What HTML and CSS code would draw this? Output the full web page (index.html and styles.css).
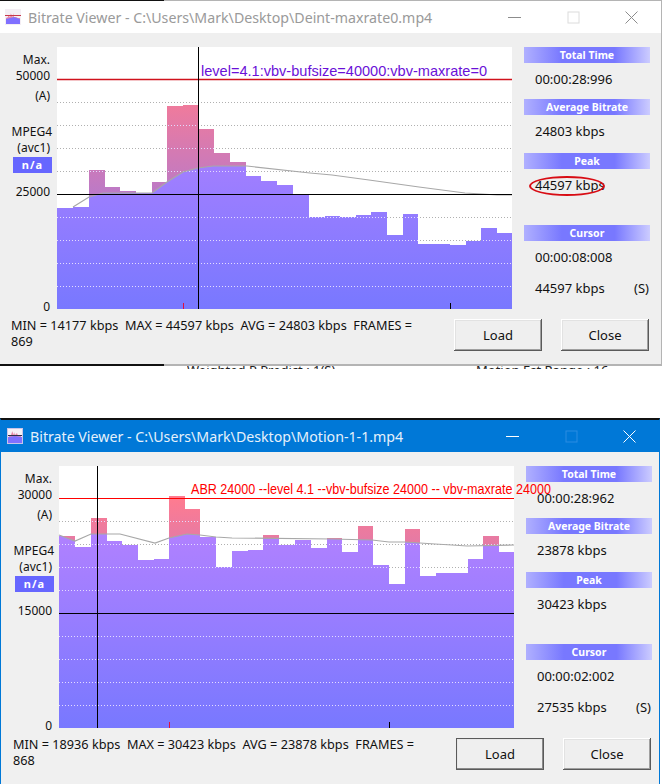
FILE: index.html
```html
<!DOCTYPE html>
<html lang="en">
<head>
    <meta charset="UTF-8">
    <meta name="viewport" content="width=device-width, initial-scale=1.0">
    <title>Bitrate Viewer</title>
    <link rel="stylesheet" href="styles.css">
</head>
<body>
    <!-- text of the window underneath, only its top edge shows -->
    <div class="peek peek-left"><span>Weighted P Predict : 1(S)</span></div>
    <div class="peek peek-right"><span>Motion Est Range : 16</span></div>

    <div class="window window-back">
        <div class="titlebar">
            <svg class="app-icon" viewBox="0 0 16 16">
                <rect width="16" height="16" fill="#f4eef4"/>
                <path d="M1 15V9L3 8V6L5 8V4L6 8V5L8 8V4L9 8H11L13 9L15 9V15Z" fill="#e88aa8"/>
                <path d="M1 15V10L5 9L9 8L15 10V15Z" fill="#8070ff"/>
                <path d="M0 6.5H16" stroke="#c8384a"/>
            </svg>
            <span class="title">Bitrate Viewer - C:\Users\Mark\Desktop\Deint-maxrate0.mp4</span>
            <div class="caption">
                <svg viewBox="0 0 13 13"><path d="M0 6.5H13"/></svg>
                <svg class="caption-max" viewBox="0 0 13 13"><rect x="1" y="1" width="11" height="11"/></svg>
                <svg viewBox="0 0 13 13"><path d="M0.5 0.5L12.5 12.5M12.5 0.5L0.5 12.5"/></svg>
            </div>
        </div>
        <div class="client">
            <div class="chart-row">
                <div class="axis">
                    <div>Max.</div>
                    <div>50000</div>
                    <div class="axis-mode">(A)</div>
                    <div class="axis-codec">MPEG4</div>
                    <div>(avc1)</div>
                    <div class="badge">n/a</div>
                    <div class="axis-mid">25000</div>
                    <div class="axis-zero">0</div>
                </div>
                <svg class="plot" width="455" height="262" viewBox="0 0 455 262">
                    <defs>
                        <linearGradient id="grad-pink" gradientUnits="userSpaceOnUse" x1="0" y1="262" x2="0" y2="0">
                            <stop offset="0" stop-color="#7878ff"/>
                            <stop offset="0.88" stop-color="#ff7b8f"/>
                            <stop offset="1" stop-color="#ff7b80"/>
                        </linearGradient>
                        <linearGradient id="grad-purple" gradientUnits="userSpaceOnUse" x1="0" y1="262" x2="0" y2="0">
                            <stop offset="0" stop-color="#7878ff"/>
                            <stop offset="1" stop-color="#c484ff"/>
                        </linearGradient>
                        <clipPath id="bars-a">
                            <path d="M0 262V161H16V160H32V123H48V140H63V144H79V146H95V135H110V59H126V58H141V82H157V106H173V115H189V129H204V134H220V138H236V148H252V170H268V169H283V170H299V168H314V165H330V188H346V167H361V197H377V197H393V198H409V194H424V181H440V186H455V262Z"/>
                        </clipPath>
                        <clipPath id="under-a">
                            <path d="M0 161L16 160L32 150L46 146L95 146L110 135L126 125L141 121L156 119L190 119L253 126L275 128L312 133L362 140L408 146L425 147L440 148L455 148V262H0Z"/>
                        </clipPath>
                    </defs>
                    <path class="grid" d="M0 55.5H455M0 78.5H455M0 101.5H455M0 124.5H455M0 170.5H455M0 193.5H455M0 216.5H455M0 239.5H455"/>
                    <g clip-path="url(#bars-a)">
                        <rect width="455" height="262" fill="url(#grad-pink)"/>
                        <rect width="455" height="262" fill="url(#grad-purple)" clip-path="url(#under-a)"/>
                        <path class="grid-light" d="M0 55.5H455M0 78.5H455M0 101.5H455M0 124.5H455M0 170.5H455M0 193.5H455M0 216.5H455M0 239.5H455"/>
                    </g>
                    <path class="curve" d="M16 160L32 150L46 146L95 146L110 135L126 125L141 121L156 119L190 119L253 126L275 128L312 133L362 140L408 146L425 147L440 148L455 148"/>
                    <path class="limit limit-dark" d="M0 32.5H455"/>
                    <path class="cross" d="M0 147.5H455M141.5 0V262M393.5 256V262"/>
                    <path class="tick" d="M126.5 256V262"/>
                    <text class="note note-purple" x="144" y="29" textLength="286" lengthAdjust="spacingAndGlyphs">level=4.1:vbv-bufsize=40000:vbv-maxrate=0</text>
                </svg>
                <div class="side">
                    <div class="stat">
                        <div class="stat-head">Total Time</div>
                        <div class="stat-value">00:00:28:996</div>
                    </div>
                    <div class="stat">
                        <div class="stat-head">Average Bitrate</div>
                        <div class="stat-value">24803 kbps</div>
                    </div>
                    <div class="stat stat-peak">
                        <div class="stat-head">Peak</div>
                        <div class="stat-value">44597 kbps<span class="peak-mark"></span></div>
                    </div>
                    <div class="stat">
                        <div class="stat-head">Cursor</div>
                        <div class="stat-value">00:00:08:008</div>
                        <div class="stat-value stat-last"><span>44597 kbps</span><span>(S)</span></div>
                    </div>
                </div>
            </div>
            <div class="summary">
                <p>MIN = 14177 kbps  MAX = 44597 kbps  AVG = 24803 kbps  FRAMES = 869</p>
                <button class="btn">Load</button>
                <button class="btn">Close</button>
            </div>
        </div>
    </div>

    <div class="window window-front">
        <div class="titlebar">
            <svg class="app-icon" viewBox="0 0 16 16">
                <rect width="16" height="16" fill="#c8c4e8"/>
                <rect x="1" y="1" width="14" height="14" fill="#f6f0f6"/>
                <path d="M2 14V8L4 7V4L5 7V3L7 7V4L8 7L10 5L11 8H14V14Z" fill="#e88aa8"/>
                <path d="M1 15V9L8 8L15 9V15Z" fill="#8070ff"/>
                <path d="M1 7.5H15" stroke="#30304a"/>
            </svg>
            <span class="title">Bitrate Viewer - C:\Users\Mark\Desktop\Motion-1-1.mp4</span>
            <div class="caption">
                <svg viewBox="0 0 13 13"><path d="M0 6.5H13"/></svg>
                <svg class="caption-max" viewBox="0 0 13 13"><rect x="1" y="1" width="11" height="11"/></svg>
                <svg viewBox="0 0 13 13"><path d="M0.5 0.5L12.5 12.5M12.5 0.5L0.5 12.5"/></svg>
            </div>
        </div>
        <div class="client">
            <div class="chart-row">
                <div class="axis">
                    <div>Max.</div>
                    <div>30000</div>
                    <div class="axis-mode">(A)</div>
                    <div class="axis-codec">MPEG4</div>
                    <div>(avc1)</div>
                    <div class="badge">n/a</div>
                    <div class="axis-mid">15000</div>
                    <div class="axis-zero">0</div>
                </div>
                <svg class="plot" width="455" height="262" viewBox="0 0 455 262">
                    <defs>
                        <clipPath id="bars-b">
                            <path d="M0 262V70H16V81H32V52H48V75H63V79H79V94H95V93H110V30H126V43H141V71H157V101H173V85H189V84H204V69H220V79H236V74H252V82H268V72H283V86H299V60H314V99H330V118H346V63H361V110H377V107H393V107H409V93H424V70H440V86H455V262Z"/>
                        </clipPath>
                        <clipPath id="under-b">
                            <path d="M0 69L16 75L32 68L61 68L96 77L110 72L128 68L141 69L157 71L173 72L273 73L313 74L330 76L346 76L376 78L393 79L408 80L455 79V262H0Z"/>
                        </clipPath>
                    </defs>
                    <path class="grid" d="M0 55.5H455M0 78.5H455M0 101.5H455M0 124.5H455M0 170.5H455M0 193.5H455M0 216.5H455M0 239.5H455"/>
                    <g clip-path="url(#bars-b)">
                        <rect width="455" height="262" fill="url(#grad-pink)"/>
                        <rect width="455" height="262" fill="url(#grad-purple)" clip-path="url(#under-b)"/>
                        <path class="grid-light" d="M0 55.5H455M0 78.5H455M0 101.5H455M0 124.5H455M0 170.5H455M0 193.5H455M0 216.5H455M0 239.5H455"/>
                    </g>
                    <path class="curve" d="M0 69L16 75L32 68L61 68L96 77L110 72L128 68L141 69L157 71L173 72L273 73L313 74L330 76L346 76L376 78L393 79L408 80L455 79"/>
                    <path class="limit" d="M0 32.5H455"/>
                    <path class="cross" d="M0 147.5H455M38.5 0V262M330.5 256V262"/>
                    <path class="tick" d="M110.5 256V262"/>
                    <text class="note note-red" x="132" y="28" textLength="360" lengthAdjust="spacingAndGlyphs">ABR 24000 --level 4.1 --vbv-bufsize 24000 -- vbv-maxrate 24000</text>
                </svg>
                <div class="side">
                    <div class="stat">
                        <div class="stat-head">Total Time</div>
                        <div class="stat-value">00:00:28:962</div>
                    </div>
                    <div class="stat">
                        <div class="stat-head">Average Bitrate</div>
                        <div class="stat-value">23878 kbps</div>
                    </div>
                    <div class="stat stat-peak">
                        <div class="stat-head">Peak</div>
                        <div class="stat-value">30423 kbps</div>
                    </div>
                    <div class="stat">
                        <div class="stat-head">Cursor</div>
                        <div class="stat-value">00:00:02:002</div>
                        <div class="stat-value stat-last"><span>27535 kbps</span><span>(S)</span></div>
                    </div>
                </div>
            </div>
            <div class="summary">
                <p>MIN = 18936 kbps  MAX = 30423 kbps  AVG = 23878 kbps  FRAMES = 868</p>
                <button class="btn btn-default">Load</button>
                <button class="btn">Close</button>
            </div>
        </div>
    </div>
</body>
</html>
```

FILE: styles.css
```css
html, body {
    margin: 0;
    height: 100%;
    background-color: white;
    overflow: hidden;
}
body {
    position: relative;
    font-family: "Noto Sans", sans-serif;
    font-size: 13px;
    color: #111;
}
.peek {
    position: absolute;
    top: 366px;
    height: 3px;
    overflow: hidden;
    font-size: 13px;
    line-height: 16px;
    color: #222;
    white-space: nowrap;
}
.peek span {
    display: block;
    margin-top: -4px;
}
.peek-left {
    left: 187px;
}
.peek-right {
    left: 476px;
}

/* windows sit on the desktop at their own place */
.window {
    position: absolute;
    box-sizing: border-box;
    border-style: solid;
    border-width: 2px 1px 1px;
    background-color: #efefef;
}
.window-back {
    left: -2px;
    top: -1px;
    width: 664px;
    height: 367px;
    border-color: #b4b4b4;
    border-bottom-width: 2px;
}
.window-back::before,
.window-back::after {
    content: "";
    position: absolute;
    left: 0;
    width: 165px;
    height: 1px;
    background-color: #111;
}
.window-back::before {
    top: -1px;
}
.window-back::after {
    bottom: -2px;
    height: 2px;
}
.window-front {
    left: 0;
    top: 418px;
    width: 660px;
    height: 370px;
    border-color: #111 #0078d7 #0078d7;
    background-color: #f0f0f0;
}

.titlebar {
    display: flex;
    align-items: center;
    height: 32px;
    background-color: white;
}
.window-front .titlebar {
    background-color: #0078d7;
}
.app-icon {
    flex: none;
    width: 16px;
    height: 16px;
    margin: 0 7px 0 6px;
}
.title {
    width: 458px;
    font-size: 14.2px;
    color: #9a9a9a;
    white-space: nowrap;
}
.window-front .title {
    color: #e6f1fb;
}
.caption {
    display: flex;
}
.caption svg {
    width: 13px;
    height: 13px;
    margin: 0 22.75px;
    fill: none;
    stroke: #8c8c8c;
    stroke-width: 1;
}
.caption .caption-max {
    stroke: #dcdcdc;
}
.window-front .caption svg {
    stroke: white;
}
.window-front .caption .caption-max {
    stroke: #2b8ce2;
}

.chart-row {
    display: flex;
    align-items: flex-start;
    padding-top: 14px;
}
.axis {
    flex: none;
    box-sizing: border-box;
    width: 51px;
    height: 262px;
    margin-right: 7px;
    padding-top: 5px;
    text-align: right;
    font-size: 12px;
    line-height: 16px;
}
.axis-mode {
    margin-top: 4px;
}
.axis-codec {
    margin-top: 20px;
    margin-right: -2px;
}
.axis-mid {
    margin-top: 11px;
}
.axis-zero {
    margin-top: 99px;
}
.badge {
    width: 39px;
    height: 16px;
    margin: 1px -2px 0 auto;
    background-color: #6666ff;
    color: white;
    font-weight: bold;
    font-size: 11px;
    letter-spacing: 1px;
    text-align: center;
}

.plot {
    flex: none;
    background-color: white;
    overflow: visible;
}
.grid {
    fill: none;
    stroke: #b0b0b0;
    stroke-dasharray: 1 2;
}
.grid-light {
    fill: none;
    stroke: #e4dcff;
    stroke-dasharray: 1 2;
}
.curve {
    fill: none;
    stroke: #a8a8a8;
    stroke-width: 1.2;
}
.limit {
    stroke: #ff0000;
}
.limit-dark {
    stroke: #d0121c;
    stroke-width: 1.4;
}
.cross {
    fill: none;
    stroke: #000;
}
.tick {
    stroke: #e0103c;
}
.note {
    font-family: "Liberation Sans", sans-serif;
    font-size: 15px;
}
.note-purple {
    fill: #6a10d8;
}
.note-red {
    fill: #ff0000;
}

.side {
    flex: none;
    width: 126px;
    margin-left: 12px;
}
.stat {
    margin-bottom: 4px;
}
.stat-peak {
    margin-top: 6px;
    margin-bottom: 24px;
}
.stat-head {
    height: 16px;
    line-height: 16px;
    text-align: center;
    font-size: 10.5px;
    font-weight: bold;
    color: white;
    background: linear-gradient(90deg, #b0b0ff 0, #7878ff 30%, #7878ff 72%, #ccccff 100%);
}
.stat-value {
    position: relative;
    height: 32px;
    padding-left: 11px;
    line-height: 32px;
}
.stat-last {
    display: flex;
    justify-content: space-between;
    height: 30px;
    padding-right: 1px;
    line-height: 30px;
}
.peak-mark {
    position: absolute;
    left: 5px;
    top: 7px;
    box-sizing: border-box;
    width: 76px;
    height: 20px;
    border: 2px solid #d80c14;
    border-radius: 50%;
}

.summary {
    display: flex;
    align-items: flex-start;
    padding-top: 10px;
}
.summary p {
    flex: none;
    box-sizing: border-box;
    width: 455px;
    margin: -2px 0 0;
    padding: 0 30px 0 12px;
    font-size: 12.7px;
    line-height: 16px;
    white-space: pre-wrap;
}
.btn {
    flex: none;
    width: 88px;
    height: 32px;
    margin-right: 19px;
    padding: 0;
    border: none;
    background-color: #efefef;
    color: #111;
    font: 13px "Noto Sans", sans-serif;
    box-shadow: inset -1px -1px #5a5a5a, inset 1px 1px #fff, inset -2px -2px #a0a0a0, inset 2px 2px #e2e2e2;
}
.btn-default {
    box-shadow: inset 0 0 0 1px #5a5a5a, inset -2px -2px #8a8a8a, inset 2px 2px #e8e8e8;
}
```
